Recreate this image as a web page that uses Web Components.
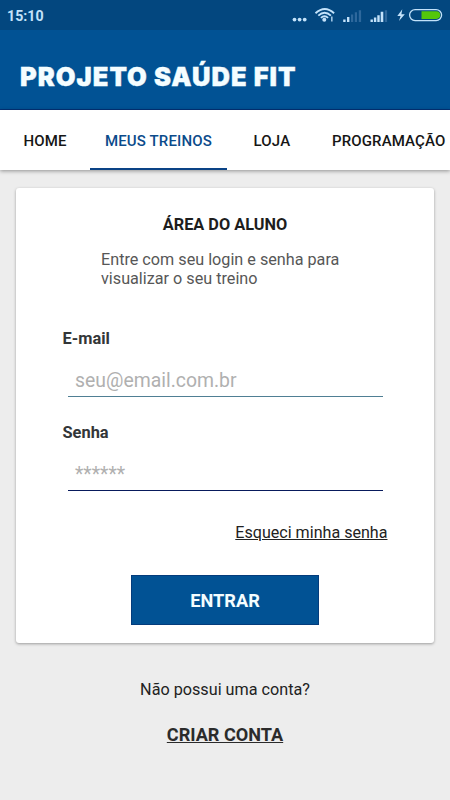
<!DOCTYPE html>
<html lang="pt-BR">
<head>
<meta charset="utf-8">
<title>Projeto Saúde Fit</title>
<style>
  body {
    margin: 0;
    background: #ededed;
    font-family: Roboto, "Liberation Sans", sans-serif;
  }
</style>
</head>
<body>
<fit-app>
  <fit-status-bar slot="top">15:10</fit-status-bar>
  <fit-header slot="top">PROJETO SAÚDE FIT</fit-header>
  <fit-tabs slot="top">
    <fit-tab>HOME</fit-tab>
    <fit-tab active>MEUS TREINOS</fit-tab>
    <fit-tab>LOJA</fit-tab>
    <fit-tab>PROGRAMAÇÃO</fit-tab>
  </fit-tabs>
  <fit-login-card>
    <span slot="title">ÁREA DO ALUNO</span>
    <span slot="intro">Entre com seu login e senha para visualizar o seu treino</span>
    <fit-field label="E-mail" style="--line: #4f7f94">seu@email.com.br</fit-field>
    <fit-field label="Senha">******</fit-field>
    <span slot="forgot">Esqueci minha senha</span>
    <fit-button slot="action">ENTRAR</fit-button>
  </fit-login-card>
  <fit-signup>
    <span slot="question">Não possui uma conta?</span>
    CRIAR CONTA
  </fit-signup>
</fit-app>

<script>
// Every element only differs in its template
class FitElement extends HTMLElement {
  constructor() {
    super();

    this.root = this.attachShadow({mode: 'open'});
    this.root.innerHTML = this.constructor.template;
  }
}

class FitApp extends FitElement {
  static template = `
    <style>
      :host {
        display: flex;
        flex-direction: column;
        height: 800px;
        overflow: hidden;
      }
      main {
        padding: 18px 16px 0;
      }
    </style>
    <slot name="top"></slot>
    <main><slot></slot></main>
    `;
}

class FitStatusBar extends FitElement {
  static template = `
    <style>
      :host {
        display: flex;
        align-items: center;
        justify-content: space-between;
        box-sizing: border-box;
        height: 30px;
        padding: 1px 0 0 7px;
        background: #03477f;
        color: #c3e2fa;
        font-size: 14.2px;
        font-weight: 700;
        line-height: 29px;
      }
      span {
        padding-top: 1px;
      }
      svg {
        display: block;
      }
    </style>
    <span><slot></slot></span>
    <svg width="160" height="29" viewBox="290 1 160 29">
      <g fill="#c3e2fa">
        <circle cx="294.5" cy="19.6" r="1.9"/>
        <circle cx="299.6" cy="19.6" r="1.9"/>
        <circle cx="304.7" cy="19.6" r="1.9"/>
        <circle cx="324.3" cy="19.8" r="2"/>
        <path d="M331.2 16.4h1.3v5.2h-1.3z"/>
        <path d="M343.2 19.6h2.4v2.4h-2.4zM347 17h2.4v5h-2.4z"/>
        <path d="M370.5 19.5h2.4v2.5h-2.4zM373.9 17.5h2.4v4.5h-2.4zM377.3 15.2h2.4v6.8h-2.4zM380.7 11.8h2.6v10.2h-2.6z"/>
        <path d="M402.3 9.3l-5 6.8h3.3l-1.6 5 5.8-6.9h-3.4z"/>
      </g>
      <g fill="#2e689c">
        <path d="M351 14.6h2.2v7.4h-2.2zM354.8 12.3h2.2v9.7h-2.2zM358.8 10.2h2.3v11.8h-2.3zM384.8 10.2h2.3v11.8h-2.3z"/>
      </g>
      <g fill="none" stroke="#c3e2fa" stroke-width="1.9">
        <path d="M315.5 13.2q9.3-8.5 18.6 0"/>
        <path d="M318.3 15.6q6.3-5.7 12.6 0"/>
        <path d="M320.9 17.9q3.6-3.2 7.2 0"/>
      </g>
      <rect x="409.6" y="9.6" width="32" height="11" rx="5.5" fill="none" stroke="#c3e2fa" stroke-width="1.3"/>
      <path d="M421.5 11.3h14.9a3.8 3.8 0 0 1 0 7.6h-14.9z" fill="#54c70b"/>
    </svg>
    `;
}

class FitHeader extends FitElement {
  static template = `
    <style>
      :host {
        display: flex;
        align-items: center;
        box-sizing: border-box;
        height: 80px;
        padding: 15px 0 0 20px;
        border-bottom: 1px solid #033279;
        background: #015294;
        color: #f4fdff;
        font: 900 25.5px/40px Inter, "Liberation Sans", sans-serif;
        letter-spacing: 1.02px;
        white-space: nowrap;
        -webkit-text-stroke: 0.4px #f4fdff;
      }
    </style>
    <slot></slot>
    `;
}

class FitTabs extends FitElement {
  static template = `
    <style>
      :host {
        display: flex;
        position: relative;
        height: 60px;
        background: #fff;
        box-shadow: 0 1px 4px rgba(0, 0, 0, 0.4);
      }
    </style>
    <slot></slot>
    `;
}

class FitTab extends FitElement {
  static template = `
    <style>
      :host {
        display: flex;
        flex: none;
        align-items: center;
        justify-content: center;
        box-sizing: border-box;
        min-width: 90px;
        padding: 3px 15px 0;
        border-bottom: 2px solid transparent;
        color: #161616;
        font-size: 15px;
        font-weight: 500;
        letter-spacing: 0.14px;
      }
      :host([active]) {
        border-bottom-color: #0a4386;
        color: #0b4b8b;
      }
    </style>
    <slot></slot>
    `;
}

class FitLoginCard extends FitElement {
  static template = `
    <style>
      :host {
        display: flex;
        flex-direction: column;
        box-sizing: border-box;
        height: 455px;
        padding: 27px 46px 0;
        border-radius: 3px;
        background: #fff;
        box-shadow: 0 1px 3px rgba(0, 0, 0, 0.35);
      }
      h1 {
        margin: 0;
        color: #1d1d1d;
        font-size: 16.3px;
        font-weight: 700;
        line-height: 20px;
        text-align: center;
      }
      p {
        width: 250px;
        margin: 15px 0 0 39px;
        color: #575757;
        font-size: 16.2px;
        line-height: 19px;
      }
      .fields {
        display: grid;
        gap: 26px;
        margin-top: 41px;
      }
      .forgot {
        align-self: flex-end;
        margin: 32px 0.5px 0 0;
        color: #222;
        font-size: 16.1px;
        line-height: 20px;
        text-decoration: underline;
      }
      .action {
        display: flex;
        justify-content: center;
        margin-top: 32px;
      }
    </style>
    <h1><slot name="title"></slot></h1>
    <p><slot name="intro"></slot></p>
    <div class="fields"><slot></slot></div>
    <div class="forgot"><slot name="forgot"></slot></div>
    <div class="action"><slot name="action"></slot></div>
    `;
}

class FitField extends FitElement {
  static template = `
    <style>
      :host {
        display: block;
      }
      label {
        display: block;
        padding-left: 0.5px;
        color: #333638;
        font-size: 16.4px;
        font-weight: 700;
        line-height: 20px;
      }
      .input {
        margin: 18px 5px 0 6px;
        padding: 0 7px 1px;
        border-bottom: 1px solid var(--line, #081a5c);
        color: #b0b0b0;
        font-size: 19.4px;
        line-height: 28px;
      }
    </style>
    <label></label>
    <div class="input"><slot></slot></div>
    `;

  connectedCallback() {
    this.root.querySelector("label").textContent = this.getAttribute("label");
  }
}

class FitButton extends FitElement {
  static template = `
    <style>
      :host {
        display: block;
        box-sizing: border-box;
        width: 188px;
        height: 50px;
        border: 1px solid #043c7c;
        background: #015294;
        color: #f4fdff;
        font-size: 18.2px;
        font-weight: 700;
        line-height: 50px;
        text-align: center;
      }
    </style>
    <slot></slot>
    `;
}

class FitSignup extends FitElement {
  static template = `
    <style>
      :host {
        display: flex;
        flex-direction: column;
        align-items: center;
        gap: 23px;
        padding-top: 37px;
      }
      .question {
        color: #222;
        font-size: 16.2px;
        line-height: 20px;
      }
      .link {
        color: #2b2b2b;
        font-size: 18.1px;
        font-weight: 700;
        line-height: 24px;
        text-decoration: underline;
      }
    </style>
    <div class="question"><slot name="question"></slot></div>
    <div class="link"><slot></slot></div>
    `;
}

customElements.define('fit-app', FitApp);
customElements.define('fit-status-bar', FitStatusBar);
customElements.define('fit-header', FitHeader);
customElements.define('fit-tabs', FitTabs);
customElements.define('fit-tab', FitTab);
customElements.define('fit-login-card', FitLoginCard);
customElements.define('fit-field', FitField);
customElements.define('fit-button', FitButton);
customElements.define('fit-signup', FitSignup);
</script>
</body>
</html>
